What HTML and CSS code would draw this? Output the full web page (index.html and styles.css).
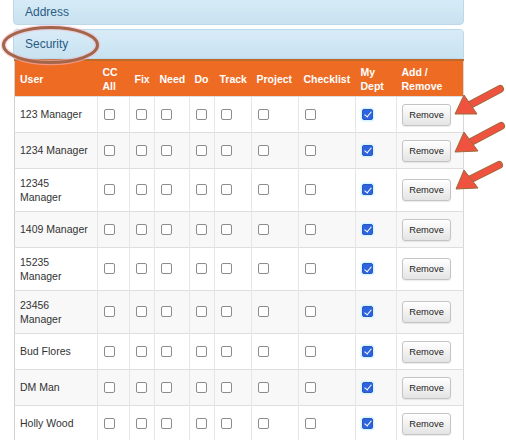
FILE: index.html
```html
<!DOCTYPE html>
<html>
<head>
<meta charset="utf-8">
<link rel="stylesheet" href="styles.css">
</head>
<body>
<div class="page">
  <div class="panel panel-top">Address</div>
  <div class="panel">Security</div>
  <table class="grid">
    <colgroup>
      <col style="width:83px"><col style="width:32px"><col style="width:25px"><col style="width:35px"><col style="width:25px"><col style="width:37px"><col style="width:47px"><col style="width:57px"><col style="width:41px"><col style="width:67px">
    </colgroup>
    <thead>
      <tr>
        <th>User</th><th>CC<br>All</th><th>Fix</th><th>Need</th><th>Do</th><th>Track</th><th>Project</th><th>Checklist</th><th>My<br>Dept</th><th>Add /<br>Remove</th>
      </tr>
    </thead>
    <tbody id="rows"></tbody>
  </table>
</div>
<svg class="marks" width="506" height="440" viewBox="0 0 506 440">
  <ellipse cx="50.5" cy="45" rx="47" ry="17.5" fill="none" stroke="#f4b8c8" stroke-width="5.5" opacity="0.55"/>
  <ellipse cx="50.5" cy="45" rx="47" ry="17.5" fill="none" stroke="#a4664a" stroke-width="3"/>
  <g class="arrow">
    <line x1="500" y1="89" x2="468" y2="106" stroke="#9c6a3c" stroke-width="8" stroke-linecap="round"/>
    <line x1="500" y1="89" x2="468" y2="106" stroke="#ef5340" stroke-width="6" stroke-linecap="round"/>
    <polygon points="455,114 464,95 477,114" fill="#ef5340" stroke="#9c6a3c" stroke-width="1"/>
  </g>
  <g class="arrow">
    <line x1="501" y1="126" x2="469" y2="143" stroke="#9c6a3c" stroke-width="8" stroke-linecap="round"/>
    <line x1="501" y1="126" x2="469" y2="143" stroke="#ef5340" stroke-width="6" stroke-linecap="round"/>
    <polygon points="455,152 464,132 478,151" fill="#ef5340" stroke="#9c6a3c" stroke-width="1"/>
  </g>
  <g class="arrow">
    <line x1="499" y1="165" x2="469" y2="180" stroke="#9c6a3c" stroke-width="8" stroke-linecap="round"/>
    <line x1="499" y1="165" x2="469" y2="180" stroke="#ef5340" stroke-width="6" stroke-linecap="round"/>
    <polygon points="456,189 464,170 478,188" fill="#ef5340" stroke="#9c6a3c" stroke-width="1"/>
  </g>
</svg>
<script>
  var names = ["123 Manager","1234 Manager","12345 Manager","1409 Manager","15235 Manager","23456 Manager","Bud Flores","DM Man","Holly Wood"];
  var body = document.getElementById("rows");
  var html = "";
  names.forEach(function (n) {
    html += "<tr><td class='name'>" + n + "</td>";
    for (var i = 0; i < 7; i++) html += "<td><span class='box'></span></td>";
    html += "<td><span class='box on'></span></td>";
    html += "<td><button class='btn'>Remove</button></td></tr>";
  });
  body.innerHTML = html;
</script>
</body>
</html>
```
FILE: styles.css
```css
html, body {
  margin: 0;
  padding: 0;
  background: #ffffff;
  overflow: hidden;
}
body {
  width: 506px;
  height: 440px;
  position: relative;
  font-family: "Liberation Sans", Arial, Helvetica, sans-serif;
}
.page {
  width: 451px;
  padding-left: 13px;
  margin-top: -4px;
}
.panel {
  height: 28px;
  line-height: 28px;
  padding-left: 11px;
  font-size: 12px;
  color: #2c5b82;
  background: linear-gradient(#d8ecf7, #c8e2f1);
  border: 1px solid #bcd9eb;
  border-radius: 4px;
  margin-bottom: 4px;
}
.panel-top {
  height: 27px;
  line-height: 31px;
}
.panel + .panel {
  margin-bottom: 0;
  border-radius: 4px 4px 0 0;
}
.grid {
  table-layout: fixed;
  border-collapse: collapse;
  width: 449px;
  margin-left: 1px;
  border-left: 1px solid #d0d0d0;
  border-right: 1px solid #d8d8d8;
}
.grid th {
  background: #ee6b24;
  color: #ffffff;
  font-size: 10.5px;
  font-weight: bold;
  line-height: 14px;
  text-align: left;
  vertical-align: middle;
  padding: 3.5px 2px 3.5px 5px;
  white-space: nowrap;
  border-top: 2px solid #bd6a2a;
}
.grid td {
  font-size: 10.5px;
  line-height: 14.5px;
  color: #333333;
  padding: 6.5px 2px 6.5px 5px;
  vertical-align: middle;
  border-top: 1px solid #dedede;
  border-left: 1px solid #e6e6e6;
}
.grid td:first-child {
  border-left: none;
}
.grid td.name {
  padding-right: 8px;
}
.grid tbody tr:nth-child(even) td {
  background: #f8f8f8;
}
.box {
  display: inline-block;
  width: 9px;
  height: 9px;
  border: 1px solid #8c8c8c;
  border-radius: 2px;
  background: #ffffff;
  vertical-align: middle;
  margin-left: 1px;
  position: relative;
  top: -1px;
}
.box.on {
  background: #2f64e0;
  border-color: #2a57c4;
  box-shadow: 0 0 0 1.5px #d6f6ff;
}
.box.on::after {
  content: "";
  position: absolute;
  left: 2.5px;
  top: 0.5px;
  width: 3px;
  height: 6px;
  border-right: 1.6px solid #ffffff;
  border-bottom: 1.6px solid #ffffff;
  transform: rotate(40deg);
}
.btn {
  display: inline-block;
  vertical-align: middle;
  height: 22px;
  width: 49px;
  padding: 0;
  margin-left: 0;
  font-family: "Liberation Sans", Arial, Helvetica, sans-serif;
  font-size: 9.3px;
  color: #222222;
  background: linear-gradient(#ffffff, #e4e4e4);
  border: 1px solid #c4c4c4;
  border-radius: 3px;
  box-shadow: 0 1px 1px rgba(0,0,0,0.08);
}
.marks {
  position: absolute;
  left: 0;
  top: 0;
  pointer-events: none;
}
```
